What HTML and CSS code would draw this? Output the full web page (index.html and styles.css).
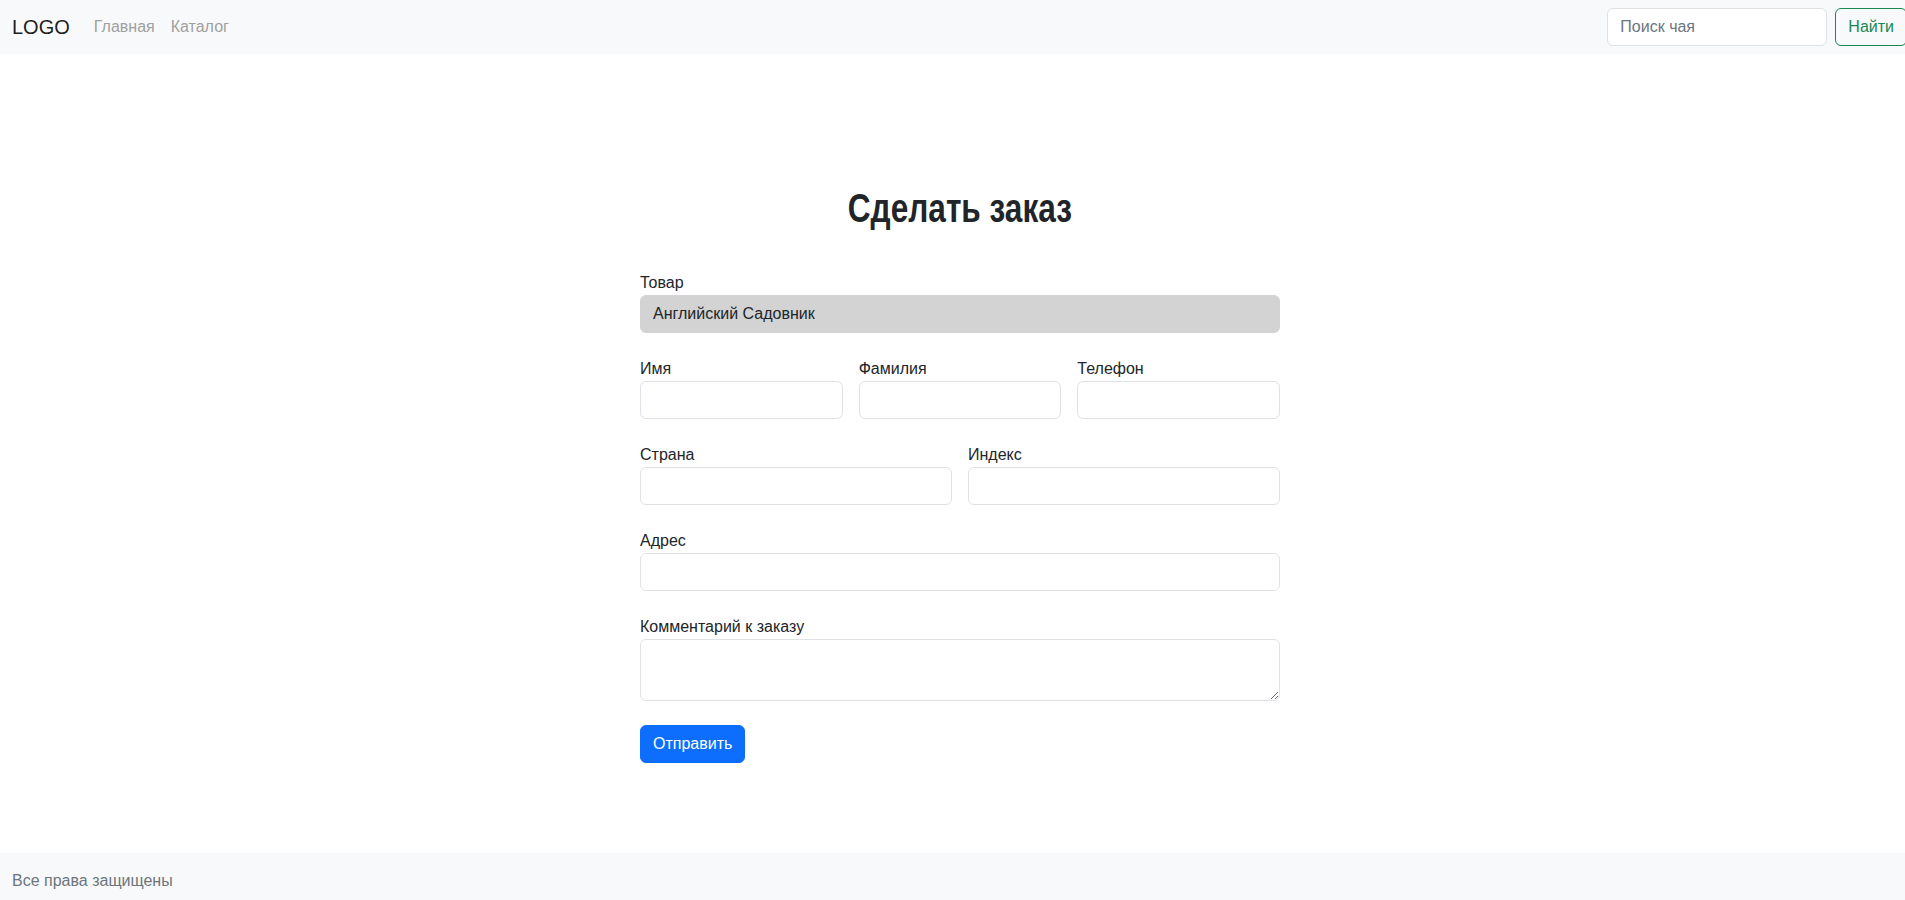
FILE: index.html
```html
<!DOCTYPE html>
<html lang="ru">
<head>
<meta charset="utf-8">
<title>Сделать заказ</title>
<link rel="stylesheet" href="styles.css">
</head>
<body>
<nav class="navbar">
  <div class="nav-left">
    <a class="brand" href="#">LOGO</a>
    <ul class="nav-links">
      <li><a class="nav-link" href="#">Главная</a></li>
      <li><a class="nav-link" href="#">Каталог</a></li>
    </ul>
  </div>
  <form class="search">
    <input class="search-input" type="search" placeholder="Поиск чая">
    <button class="btn-find" type="button">Найти</button>
  </form>
</nav>
<main class="main">
  <div class="order">
    <h2 class="title"><span class="title-text">Сделать заказ</span></h2>
    <form class="order-form">
      <div class="field">
        <label class="label">Товар</label>
        <input class="control control-readonly" type="text" value="Английский Садовник" readonly>
      </div>
      <div class="row row-3">
        <div class="cell">
          <label class="label">Имя</label>
          <input class="control" type="text">
        </div>
        <div class="cell">
          <label class="label">Фамилия</label>
          <input class="control" type="text">
        </div>
        <div class="cell">
          <label class="label">Телефон</label>
          <input class="control" type="text">
        </div>
      </div>
      <div class="row row-2">
        <div class="cell">
          <label class="label">Страна</label>
          <input class="control" type="text">
        </div>
        <div class="cell">
          <label class="label">Индекс</label>
          <input class="control" type="text">
        </div>
      </div>
      <div class="field">
        <label class="label">Адрес</label>
        <input class="control" type="text">
      </div>
      <div class="field">
        <label class="label">Комментарий к заказу</label>
        <textarea class="control control-area" rows="2"></textarea>
      </div>
      <button class="btn-submit" type="button">Отправить</button>
    </form>
  </div>
</main>
<footer class="footer">Все права защищены</footer>
</body>
</html>
```
FILE: styles.css
```css
html {
  overflow: hidden;
}

body {
  width: 1920px;
  margin: 0;
  font-family: "Liberation Sans", Arial, sans-serif;
  font-size: 16px;
  line-height: 1.5;
  color: #212529;
  background: #fff;
}

.navbar {
  display: flex;
  align-items: center;
  justify-content: space-between;
  box-sizing: border-box;
  height: 54px;
  padding: 8px 13px 8px 12px;
  background: #f8f9fa;
}

.nav-left {
  display: flex;
  align-items: center;
}

.brand {
  font-size: 20px;
  line-height: 30px;
  color: rgba(0, 0, 0, 0.9);
  text-decoration: none;
  margin-right: 16px;
}

.nav-links {
  display: flex;
  list-style: none;
  margin: 0;
  padding: 0;
}

.nav-link {
  display: block;
  padding: 8px;
  color: #a0a0a0;
  text-decoration: none;
}

.search {
  display: flex;
  gap: 8px;
  margin: 0;
}

.search-input {
  box-sizing: border-box;
  width: 220px;
  height: 38px;
  padding: 6px 12px;
  border: 1px solid #dee2e6;
  border-radius: 6px;
  background: #fff;
  font: inherit;
  color: #212529;
  outline: none;
}

.search-input::placeholder {
  color: #6c757d;
}

.btn-find {
  box-sizing: border-box;
  height: 38px;
  padding: 6px 12px;
  border: 1px solid #198754;
  border-radius: 6px;
  background: transparent;
  color: #198754;
  font: inherit;
  line-height: 24px;
}

.main {
  padding: 130px 0 90px;
}

.order {
  width: 640px;
  margin: 0 auto;
}

.title {
  margin: 0 0 39px;
  text-align: center;
  font-weight: 700;
  font-size: 40px;
  line-height: 48px;
  color: #212529;
}

.title-text {
  display: inline-block;
  transform: scaleX(0.79);
}

.order-form {
  margin: 0;
}

.field {
  margin-bottom: 24px;
}

.label {
  display: block;
  line-height: 24px;
}

.control {
  display: block;
  box-sizing: border-box;
  width: 100%;
  height: 38px;
  padding: 6px 12px;
  border: 1px solid #dee2e6;
  border-radius: 6px;
  background: #fff;
  font: inherit;
  color: #212529;
  outline: none;
}

.control-readonly {
  background: #d3d3d3;
  border-color: #d3d3d3;
}

.control-area {
  height: 62px;
  resize: vertical;
}

.row {
  display: grid;
  gap: 16px;
  margin-bottom: 24px;
}

.row-3 {
  grid-template-columns: repeat(3, 1fr);
}

.row-2 {
  grid-template-columns: repeat(2, 1fr);
}

.btn-submit {
  box-sizing: border-box;
  height: 38px;
  padding: 6px 12px;
  border: 1px solid #0d6efd;
  border-radius: 6px;
  background: #0d6efd;
  color: #fff;
  font: inherit;
  line-height: 24px;
}

.footer {
  padding: 16px 12px;
  background: #f8f9fa;
  color: #6c757d;
  line-height: 24px;
}
```
